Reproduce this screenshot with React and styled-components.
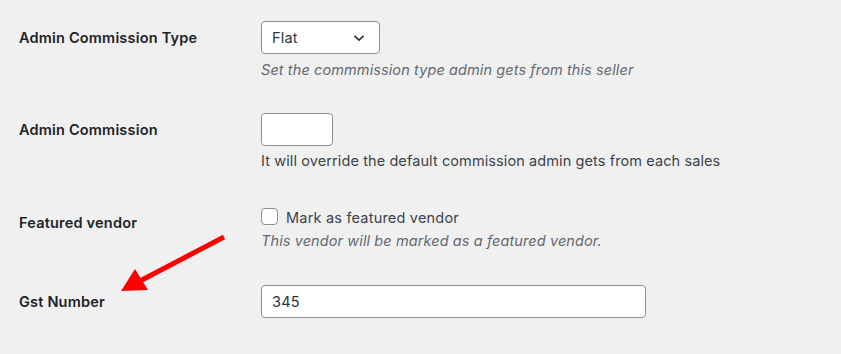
import React from "react";
import styled, { createGlobalStyle } from "styled-components";

const GlobalStyle = createGlobalStyle`
  html, body {
    margin: 0;
    padding: 0;
    background: #f0f0f1;
  }
  body {
    font-family: Inter, "Noto Sans", "Liberation Sans", sans-serif;
    color: #1d2327;
    letter-spacing: 0.2px;
  }
`;

const App = () => {
  return (
    <Page>
      <GlobalStyle />
      <Row $top={21}>
        <Label $pad={8}>Admin Commission Type</Label>
        <Field>
          <SelectBox>
            <span>Flat</span>
            <svg width="12" height="8" viewBox="0 0 12 8">
              <path d="M1.5 1.8 L6 6 L10.5 1.8" fill="none" stroke="#2c3338" strokeWidth="1.7" />
            </svg>
          </SelectBox>
          <Description $italic $gap={7}>
            Set the commmission type admin gets from this seller
          </Description>
        </Field>
      </Row>

      <Row $top={34}>
        <Label $pad={8}>Admin Commission</Label>
        <Field>
          <TextInput $width={72} defaultValue="" />
          <Description $gap={6}>
            It will override the default commission admin gets from each sales
          </Description>
        </Field>
      </Row>

      <Row $top={38}>
        <Label $pad={6}>Featured vendor</Label>
        <Field>
          <CheckLine>
            <CheckBox />
            Mark as featured vendor
          </CheckLine>
          <Description $italic $gap={5}>
            This vendor will be marked as a featured vendor.
          </Description>
        </Field>
      </Row>

      <Row $top={35}>
        <Label $pad={8}>Gst Number</Label>
        <Field>
          <TextInput $width={385} defaultValue="345" />
        </Field>
      </Row>

      <Arrow width="841" height="354" viewBox="0 0 841 354">
        <line x1="224" y1="237" x2="138" y2="282" stroke="#fe0000" strokeWidth="5" />
        <polygon points="121,291 135,269 148,290" fill="#fe0000" />
      </Arrow>
    </Page>
  );
};

const Page = styled.div`
  position: relative;
  width: 841px;
  height: 354px;
  padding-left: 19px;
  box-sizing: border-box;
  overflow: hidden;
`;

const Row = styled.div`
  display: grid;
  grid-template-columns: 242px 1fr;
  margin-top: ${(p) => p.$top}px;
`;

const Label = styled.div`
  padding-top: ${(p) => p.$pad}px;
  font-size: 14.5px;
  line-height: 18px;
  font-weight: 600;
  color: #1d2327;
`;

const Field = styled.div`
  display: flex;
  flex-direction: column;
  align-items: flex-start;
`;

const SelectBox = styled.div`
  width: 119px;
  height: 33px;
  box-sizing: border-box;
  border: 1px solid #8c8f94;
  border-radius: 4px;
  background: #fff;
  display: flex;
  align-items: center;
  justify-content: space-between;
  padding: 0 14px 0 10px;
  font-size: 14.5px;
  color: #2c3338;
`;

const TextInput = styled.input`
  width: ${(p) => p.$width}px;
  height: 33px;
  box-sizing: border-box;
  border: 1px solid #8c8f94;
  border-radius: 4px;
  background: #fff;
  padding: 0 10px;
  font-family: inherit;
  letter-spacing: inherit;
  font-size: 14.5px;
  color: #2c3338;
  outline: none;
`;

const Description = styled.p`
  margin: ${(p) => p.$gap}px 0 0;
  font-size: 14.5px;
  line-height: 18px;
  letter-spacing: 0.1px;
  font-style: ${(p) => (p.$italic ? "italic" : "normal")};
  color: ${(p) => (p.$italic ? "#646970" : "#3c434a")};
`;

const CheckLine = styled.label`
  display: flex;
  align-items: center;
  gap: 8px;
  font-size: 14.5px;
  line-height: 18px;
  color: #3c434a;
  margin-top: 1px;
`;

const CheckBox = styled.span`
  width: 17px;
  height: 17px;
  box-sizing: border-box;
  border: 1px solid #8c8f94;
  border-radius: 4px;
  background: #fff;
  margin-top: -4px;
`;

const Arrow = styled.svg`
  position: absolute;
  left: 0;
  top: 0;
  pointer-events: none;
`;

export default App;
